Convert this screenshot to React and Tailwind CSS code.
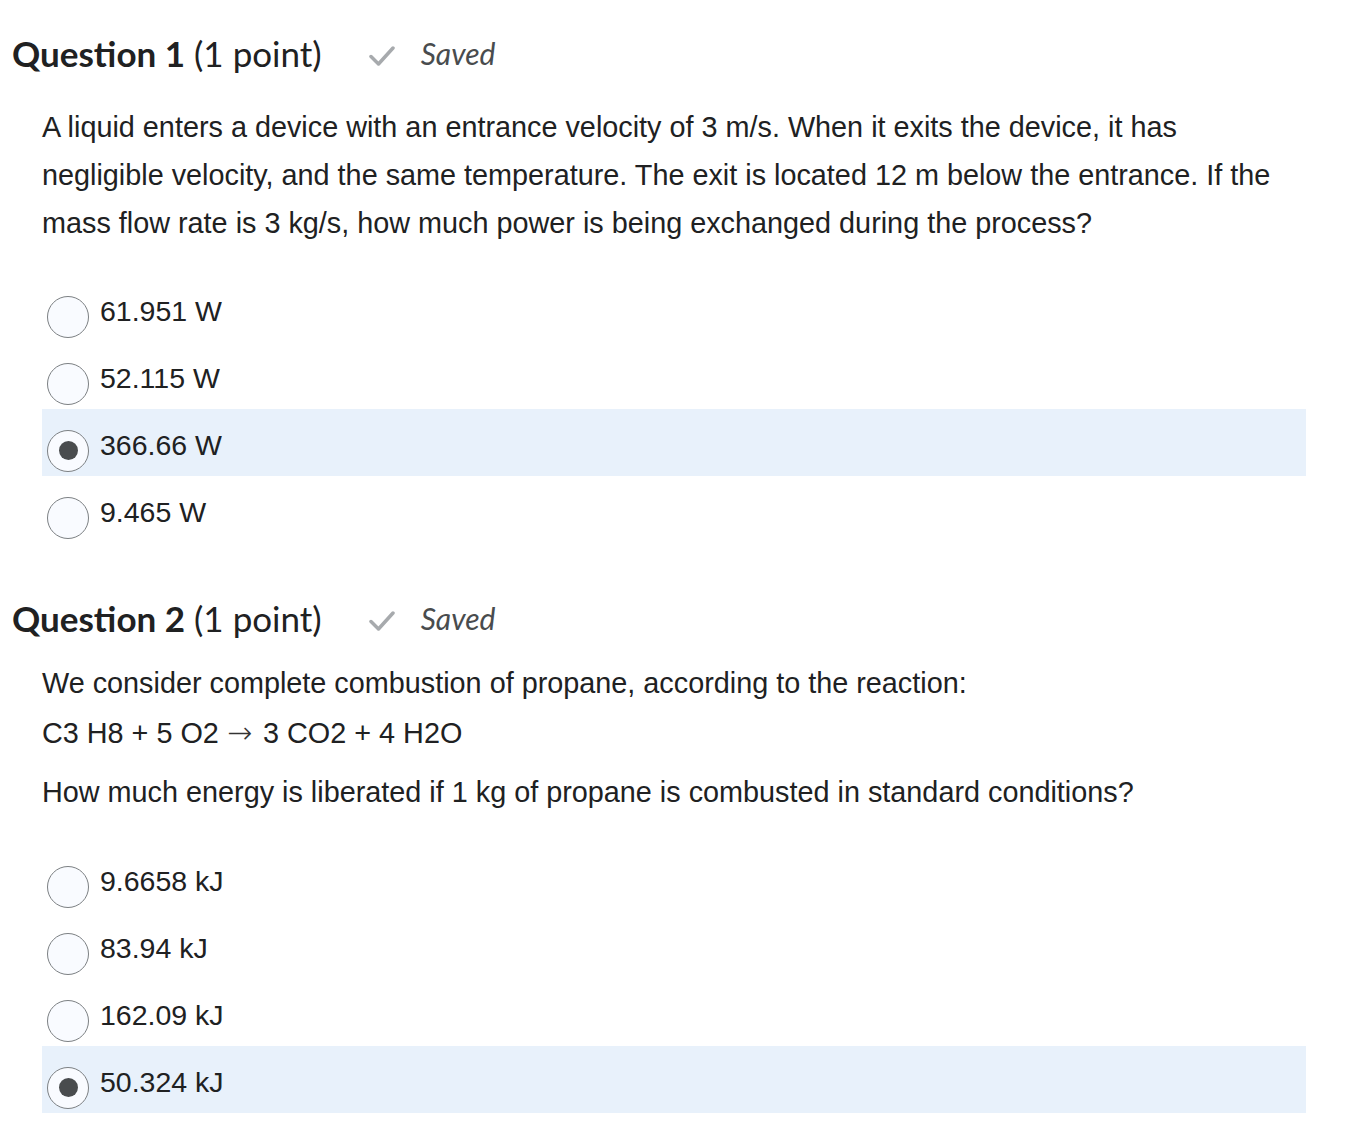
import { useState } from "react";

const QUESTIONS = [
    {
        n: 1,
        paragraphs: [
            "A liquid enters a device with an entrance velocity of 3 m/s. When it exits the device, it has negligible velocity, and the same temperature. The exit is located 12 m below the entrance. If the mass flow rate is 3 kg/s, how much power is being exchanged during the process?",
        ],
        options: ["61.951 W", "52.115 W", "366.66 W", "9.465 W"],
        selected: 2,
    },
    {
        n: 2,
        paragraphs: [
            "We consider complete combustion of propane, according to the reaction:",
            "arrow",
            "How much energy is liberated if 1 kg of propane is combusted in standard conditions?",
        ],
        options: ["9.6658 kJ", "83.94 kJ", "162.09 kJ", "50.324 kJ"],
        selected: 3,
    },
];

function Header({ n }) {
    return (
        <div className="flex items-center h-10 pl-3 font-['Lato',sans-serif] text-[#202122]">
            <h2 className="text-[35px] leading-10">
                <span className="font-bold">Question {n}</span> (1 point)
            </h2>
            <svg width="26" height="22" viewBox="0 0 26 22" className="ml-[47px] mt-[6px]" fill="none">
                <path d="M2 11.5 L9.5 19 L24 3" stroke="#a7aaad" strokeWidth="3.5" strokeLinecap="round" strokeLinejoin="round" />
            </svg>
            <span className="ml-[26px] text-[30px] italic text-[#494c4e] leading-10">Saved</span>
        </div>
    );
}

function Option({ label, checked, onSelect }) {
    return (
        <label
            onClick={onSelect}
            className={`flex items-center h-[67px] pl-[5px] cursor-pointer ${checked ? "bg-[#e8f1fb]" : ""}`}
        >
            <span className="w-[42px] h-[42px] mt-4 rounded-full border border-[#7c8083] bg-[#f9fbff] flex items-center justify-center shrink-0">
                {checked && <span className="w-[19px] h-[19px] rounded-full bg-[#494c4e]" />}
            </span>
            <span className="ml-[11px] text-[28.5px] text-[#202122] mt-[6px]">{label}</span>
        </label>
    );
}

function Question({ q, first }) {
    const [sel, setSel] = useState(q.selected);
    return (
        <div className={first ? "pt-[33px]" : "pt-[55px]"}>
            <Header n={q.n} />
            <div className={`pl-[42px] w-[1292px] text-[28.8px] text-[#202122] ${first ? "mt-[30px]" : "mt-[21px]"}`}>
                {q.paragraphs.map((p, i) => (
                    <p key={i} className={`leading-[48px] ${i === 1 ? "mt-[2px]" : i === 2 ? "mt-[11px]" : ""}`}>
                        {p === "arrow" ? (
                            <>
                                C3 H8 + 5 O2{" "}
                                <span className="font-['DejaVu_Sans',sans-serif] text-[30px] font-extralight text-[#333] mr-[3px]">{"\u2192"}</span>{" "}
                                3 CO2 + 4 H2O
                            </>
                        ) : (
                            p
                        )}
                    </p>
                ))}
            </div>
            <div className={`ml-[42px] mr-[39px] ${first ? "mt-[28px]" : "mt-[29px]"}`}>
                {q.options.map((o, i) => (
                    <Option key={o} label={o} checked={sel === i} onSelect={() => setSel(i)} />
                ))}
            </div>
        </div>
    );
}

export default function App() {
    return (
        <div className="w-[1345px] h-[1144px] bg-white font-['Liberation_Sans',Arial,sans-serif] overflow-hidden">
            {QUESTIONS.map((q, i) => (
                <Question key={q.n} q={q} first={i === 0} />
            ))}
        </div>
    );
}
